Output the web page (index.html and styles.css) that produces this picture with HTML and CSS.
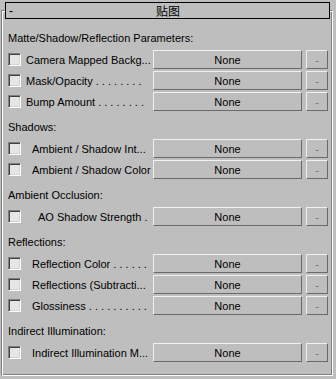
FILE: index.html
```html
<!DOCTYPE html>
<html lang="zh">
<head>
    <meta charset="UTF-8">
    <title>贴图</title>
    <link rel="stylesheet" href="styles.css">
</head>
<body>
    <div class="rollout">
        <div class="rollout-title">
            <span class="collapse">-</span>
            <span class="title-text">贴图</span>
        </div>

        <div class="group-label first">Matte/Shadow/Reflection Parameters:</div>
        <div class="map-row">
            <span class="check"></span>
            <span class="map-label">Camera Mapped Backg...</span>
            <button class="map-btn">None</button>
            <button class="clear-btn">-</button>
        </div>
        <div class="map-row">
            <span class="check"></span>
            <span class="map-label">Mask/Opacity . . . . . . . .</span>
            <button class="map-btn">None</button>
            <button class="clear-btn">-</button>
        </div>
        <div class="map-row">
            <span class="check"></span>
            <span class="map-label">Bump Amount . . . . . . . .</span>
            <button class="map-btn">None</button>
            <button class="clear-btn">-</button>
        </div>

        <div class="group-label">Shadows:</div>
        <div class="map-row">
            <span class="check"></span>
            <span class="map-label indent">Ambient / Shadow Int...</span>
            <button class="map-btn">None</button>
            <button class="clear-btn">-</button>
        </div>
        <div class="map-row">
            <span class="check"></span>
            <span class="map-label indent">Ambient / Shadow Color</span>
            <button class="map-btn">None</button>
            <button class="clear-btn">-</button>
        </div>

        <div class="group-label">Ambient Occlusion:</div>
        <div class="map-row">
            <span class="check"></span>
            <span class="map-label indent-more">AO Shadow Strength .</span>
            <button class="map-btn">None</button>
            <button class="clear-btn">-</button>
        </div>

        <div class="group-label">Reflections:</div>
        <div class="map-row">
            <span class="check"></span>
            <span class="map-label indent">Reflection Color . . . . . .</span>
            <button class="map-btn">None</button>
            <button class="clear-btn">-</button>
        </div>
        <div class="map-row">
            <span class="check"></span>
            <span class="map-label indent">Reflections (Subtracti...</span>
            <button class="map-btn">None</button>
            <button class="clear-btn">-</button>
        </div>
        <div class="map-row">
            <span class="check"></span>
            <span class="map-label indent">Glossiness . . . . . . . . . .</span>
            <button class="map-btn">None</button>
            <button class="clear-btn">-</button>
        </div>

        <div class="group-label">Indirect Illumination:</div>
        <div class="map-row">
            <span class="check"></span>
            <span class="map-label indent">Indirect Illumination M...</span>
            <button class="map-btn">None</button>
            <button class="clear-btn">-</button>
        </div>
    </div>
</body>
</html>
```

FILE: styles.css
```css
* {
    box-sizing: border-box;
    margin: 0;
    padding: 0;
}

html, body {
    height: 379px;
    overflow: hidden;
}

body {
    font-family: 'Liberation Sans', Arial, sans-serif;
    font-size: 11px;
    color: #000;
    background-color: #bebebe;
}

.rollout {
    margin: 10px 3px 3px 1px;
    height: 366px;
    border: 1px solid;
    border-color: #808080 #fff #fff #808080;
    box-shadow: inset 1px 1px #fff, inset -1px -1px #808080;
    padding: 0 4px 0 6px;
}

.rollout-title {
    display: flex;
    align-items: center;
    height: 17px;
    margin: -9px -2px 0 -3px;
    border: 1px solid #000;
    background-color: #bebebe;
    position: relative;
}

.collapse {
    padding-left: 3px;
    font-size: 12px;
}

.title-text {
    flex: 1;
    text-align: center;
    padding-right: 6px;
    font-family: 'Noto Sans CJK SC', sans-serif;
    font-size: 12px;
    line-height: 15px;
}

.group-label {
    height: 16px;
    line-height: 16px;
    margin: 8px 0 4px 0;
}

.group-label.first {
    margin-top: 11px;
    margin-bottom: 4px;
}

.map-row {
    display: flex;
    align-items: center;
    height: 19px;
    margin-bottom: 2px;
}

.check {
    width: 13px;
    height: 13px;
    flex: none;
    border: 1px solid;
    border-color: #808080 #fff #fff #808080;
    box-shadow: inset 1px 1px #404040, inset -1px -1px #d4d4d4;
    background-color: #e6e6e6;
}

.map-label {
    flex: 1;
    padding-left: 5px;
    white-space: nowrap;
    overflow: hidden;
}

.map-label.indent {
    padding-left: 11px;
}

.map-label.indent-more {
    padding-left: 17px;
}

.map-btn,
.clear-btn {
    height: 19px;
    font-family: inherit;
    font-size: 11px;
    background-color: #bebebe;
    border: 1px solid;
    border-color: #f0f0f0 #6a6a6a #6a6a6a #f0f0f0;
    color: #000;
}

.map-btn {
    width: 149px;
    flex: none;
}

.clear-btn {
    width: 22px;
    flex: none;
    margin-left: 4px;
    color: #707070;
}
```
